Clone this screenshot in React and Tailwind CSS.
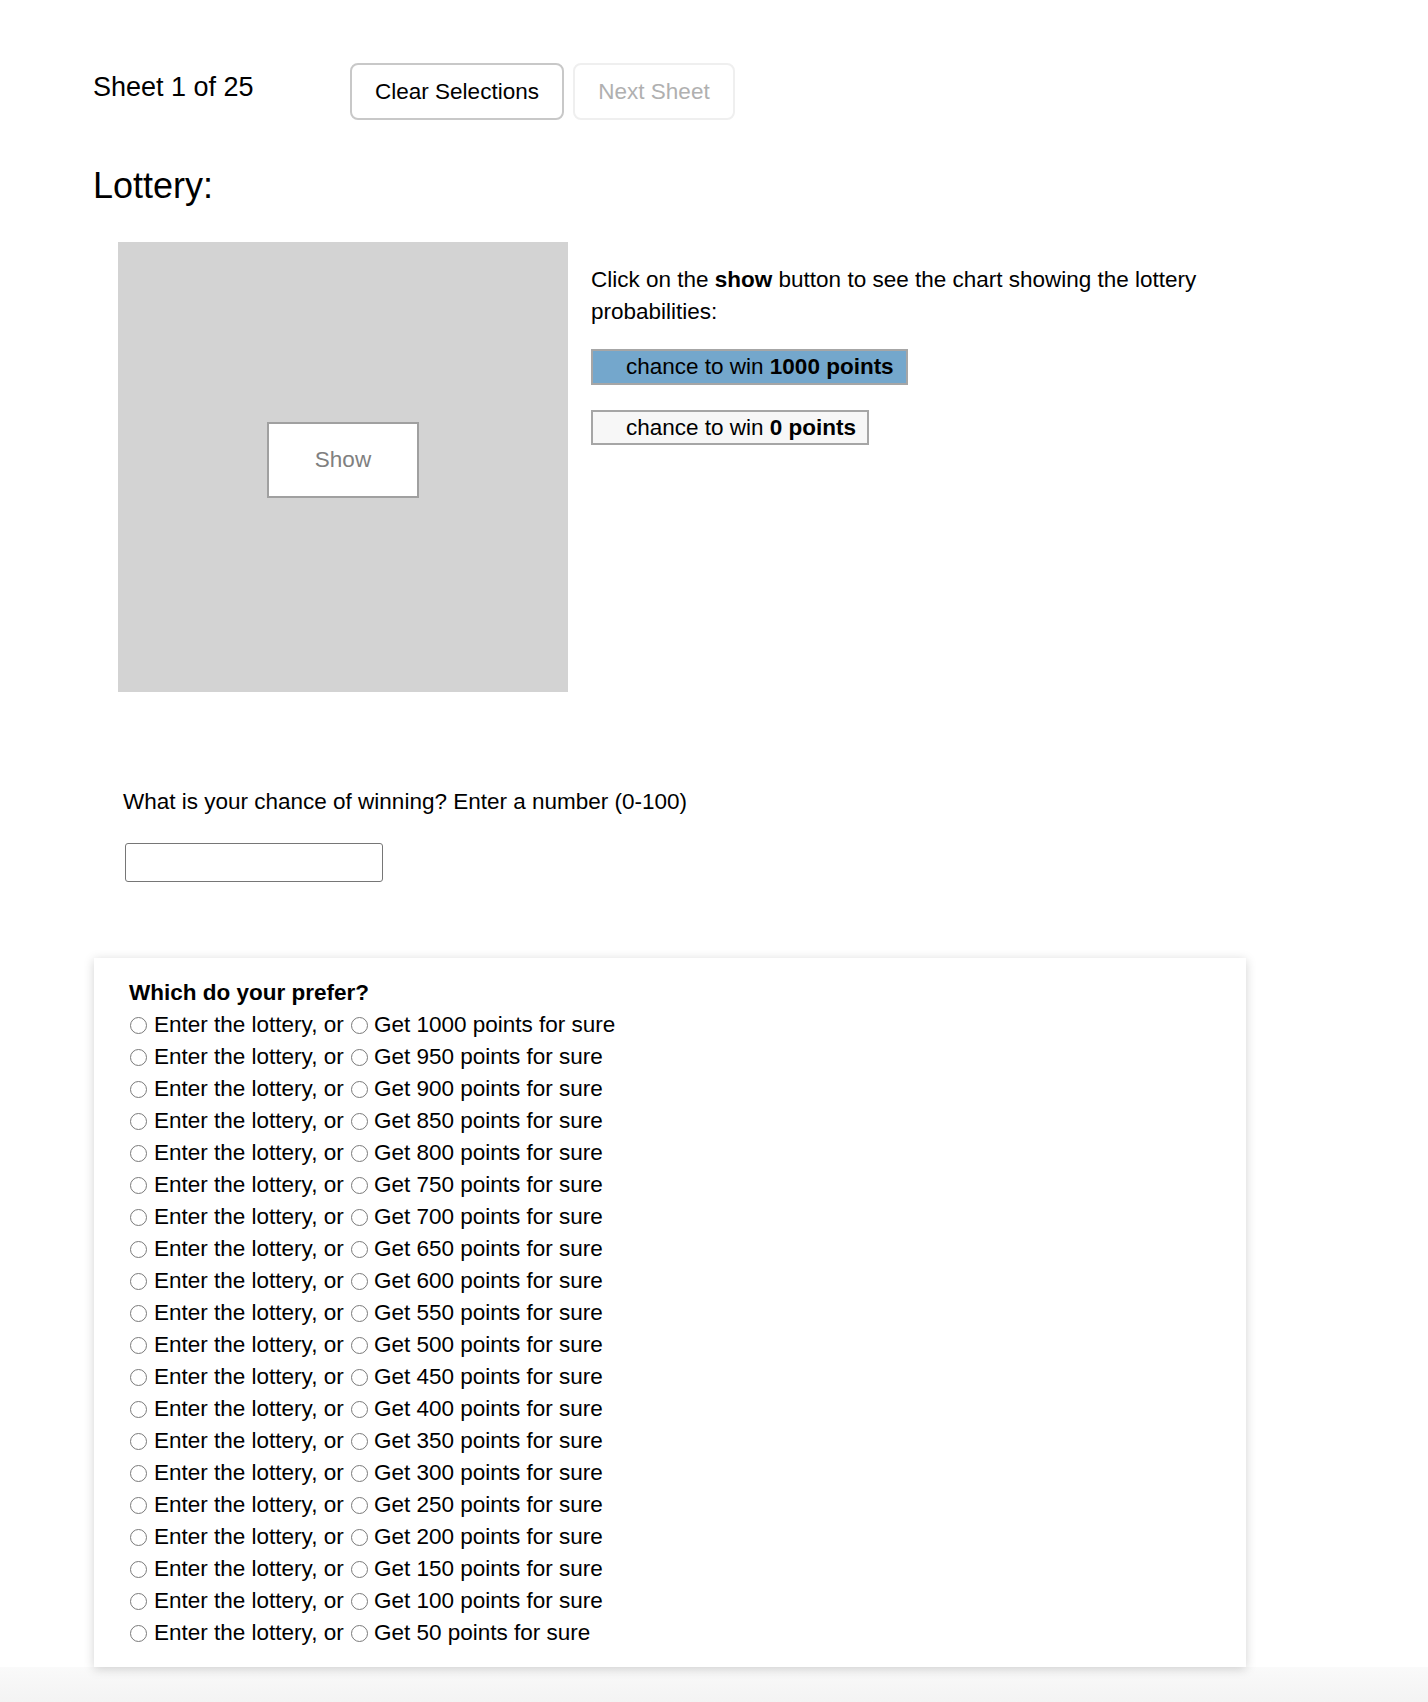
import React, { useState } from 'react';

const amounts = [1000, 950, 900, 850, 800, 750, 700, 650, 600, 550, 500, 450, 400, 350, 300, 250, 200, 150, 100, 50];

const Radio = ({ checked, onClick, className }) => (
  <span
    onClick={onClick}
    className={`inline-block w-[17px] h-[17px] rounded-full border-[1.5px] border-[#7a7a7a] bg-white align-[-2px] cursor-pointer ${className}`}
  >
    {checked && <span className="block w-[9px] h-[9px] m-[2.5px] rounded-full bg-[#1a73e8]" />}
  </span>
);

const App = () => {
  const [picks, setPicks] = useState({});
  const [chance, setChance] = useState('');

  return (
    <div className="min-h-screen bg-white text-black font-['Liberation_Sans',Arial,sans-serif] flex flex-col">
      <div className="pl-[93px] pr-[182px] flex-1">
        <div className="flex items-start pt-[63px]">
          <span className="w-[257px] mt-[9px] text-[27px] leading-[31px]">Sheet 1 of 25</span>
          <button
            onClick={() => setPicks({})}
            className="w-[214px] h-[57px] rounded-[8px] border-2 border-[#c8c8c8] bg-white text-[22.5px] flex items-center justify-center"
          >
            Clear Selections
          </button>
          <button disabled className="ml-[9px] w-[162px] h-[57px] rounded-[8px] border-2 border-[#efefef] bg-white text-[22.5px] text-[#b0b0b0] flex items-center justify-center">
            Next Sheet
          </button>
        </div>

        <h1 className="mt-[45px] text-[36px] leading-[42px]">Lottery:</h1>

        <div className="mt-[35px] ml-[25px] flex">
          <div className="w-[450px] h-[450px] bg-[#d3d3d3] flex items-center justify-center shrink-0">
            <button className="mb-[15px] w-[152px] h-[76px] bg-white border-2 border-[#a0a0a0] text-[22.5px] text-[#808080]">Show</button>
          </div>
          <div className="ml-[23px] pt-[22px] text-[22.5px] leading-[31.5px]">
            <p>Click on the <b>show</b> button to see the chart showing the lottery probabilities:</p>
            <div className="mt-[22px]">
              <span className="inline-block h-[36px] leading-[32px] pl-[33px] pr-[12px] border-2 border-[#a6a6a6] bg-[#74a7cc]">
                chance to win <b>1000 points</b>
              </span>
            </div>
            <div className="mt-[25px]">
              <span className="inline-block h-[35px] leading-[31px] pl-[33px] pr-[11px] border-2 border-[#a6a6a6] bg-[#f7f7f7]">
                chance to win <b>0 points</b>
              </span>
            </div>
          </div>
        </div>

        <div className="ml-[30px] mt-[94px] text-[22.5px] leading-[31.5px]">
          <p>What is your chance of winning? Enter a number (0-100)</p>
          <input
            value={chance}
            onChange={(e) => setChance(e.target.value)}
            className="mt-[25px] ml-[2px] block w-[258px] h-[39px] rounded-[3px] border-[1.5px] border-[#767676] outline-none px-2"
          />
        </div>

        <div className="relative z-10 mt-[76px] ml-[1px] w-[1152px] bg-white shadow-[0_2px_10px_rgba(0,0,0,0.18)] pl-[35px] pt-[19px] pb-[18px] text-[22.5px] leading-[32px]">
          <p className="font-bold">Which do your prefer?</p>
          {amounts.map((a) => (
            <div key={a} className="whitespace-nowrap">
              <Radio checked={picks[a] === 'L'} onClick={() => setPicks({ ...picks, [a]: 'L' })} className="ml-[1px] mr-[7px]" />
              Enter the lottery, or{' '}
              <Radio checked={picks[a] === 'S'} onClick={() => setPicks({ ...picks, [a]: 'S' })} className="ml-[1px] mr-[6px]" />
              Get {a} points for sure
            </div>
          ))}
        </div>
      </div>
      <div className="h-[36px] bg-gradient-to-b from-[#fafafa] to-[#f3f3f3]" />
    </div>
  );
};

export default App;
